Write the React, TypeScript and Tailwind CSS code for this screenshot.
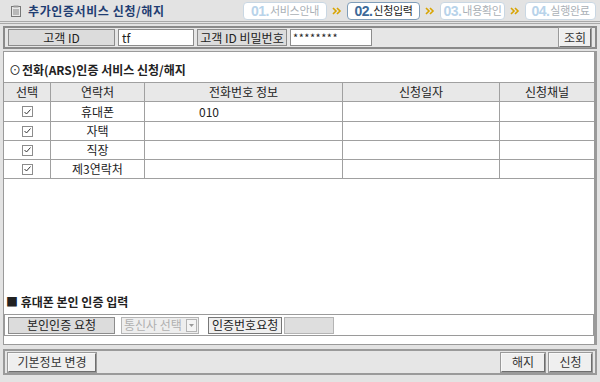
import { ReactNode } from "react"

const font = { fontFamily: '"Noto Sans CJK KR", "Noto Sans", sans-serif' }

function Step({ no, label, w, active }: { no: string; label: string; w: string; active?: boolean }) {
    return (
        <div
            className={
                w +
                " h-[18px] flex items-center justify-center rounded-[4px] bg-white border " +
                (active ? "border-[#7f9db9] text-[#222]" : "border-[#c9d7e3] text-[#aab0b6]")
            }
        >
            <span
                className={
                    "text-[14px] font-bold leading-none tracking-[-0.5px] " +
                    (active ? "text-[#3d6a99]" : "text-[#b8d3ea]")
                }
                style={{ fontFamily: '"Liberation Sans", sans-serif' }}
            >
                {no}.
            </span>
            <span className="ml-[1px] text-[11px] leading-none tracking-[-0.3px]">{label}</span>
        </div>
    )
}

function Chevron() {
    return (
        <svg width="10" height="8" viewBox="0 0 10 8" className="mx-[5px]">
            <path d="M1 1 L4 4 L1 7" stroke="#d9a400" strokeWidth="1.6" fill="none" />
            <path d="M5 1 L8 4 L5 7" stroke="#d9a400" strokeWidth="1.6" fill="none" />
        </svg>
    )
}

function Label({ children, w }: { children: ReactNode; w: string }) {
    return (
        <div
            className={
                w +
                " h-[17px] flex items-center justify-center bg-[#dcdcdc] border border-[#8c8c8c] text-[12px] text-[#222]"
            }
        >
            {children}
        </div>
    )
}

function Btn({ children, w }: { children: ReactNode; w: string }) {
    return (
        <div
            className={
                w +
                " h-[19px] flex items-center justify-center bg-[#efefef] border border-t-[#f8f8f8] border-l-[#f8f8f8] border-r-[#6e6e6e] border-b-[#6e6e6e] outline outline-1 outline-[#9a9a9a] text-[12px] text-[#333]"
            }
        >
            {children}
        </div>
    )
}

function Check() {
    return (
        <div className="w-[11px] h-[11px] border border-[#8c8c8c] bg-white flex items-center justify-center">
            <svg width="7" height="6" viewBox="0 0 7 6">
                <path d="M0.5 3 L2.5 5 L6.5 0.5" stroke="#333" strokeWidth="1" fill="none" />
            </svg>
        </div>
    )
}

const rows = [
    { name: "휴대폰", phone: "010" },
    { name: "자택", phone: "" },
    { name: "직장", phone: "" },
    { name: "제3연락처", phone: "" },
]

const cols = "grid grid-cols-[46px_94px_198px_157px_1fr]"

export default function App() {
    return (
        <div className="w-[600px] h-[382px] bg-[#e3e3e3] flex flex-col text-[#222]" style={font}>
            <div className="h-[24px] flex items-center border-b-[3px] border-double border-[#a8a8a8]">
                <svg width="10" height="12" viewBox="0 0 10 12" className="ml-[11px] mr-[7px]">
                    <rect x="0.5" y="1.5" width="9" height="10" fill="#e8e8e8" stroke="#777" />
                    <rect x="2.5" y="0.5" width="5" height="2" fill="#999" />
                    <path d="M2 5 H8 M2 7 H8 M2 9 H8" stroke="#888" strokeWidth="1" />
                </svg>
                <span className="text-[12px] font-bold text-[#1f3d72] tracking-[0.6px]">추가인증서비스 신청/해지</span>
                <div className="ml-auto mr-[4px] flex items-center">
                    <Step no="01" label="서비스안내" w="w-[84px]" />
                    <Chevron />
                    <Step no="02" label="신청입력" w="w-[73px]" active />
                    <Chevron />
                    <Step no="03" label="내용확인" w="w-[65px]" />
                    <Chevron />
                    <Step no="04" label="실행완료" w="w-[71px]" />
                </div>
            </div>

            <div className="mx-[3px] mt-[2px] h-[23px] border-2 border-[#8a8a8a] bg-[#e6e6e6] flex items-center pl-[3px] pr-[4px] gap-[3px]">
                <Label w="w-[107px]">고객 ID</Label>
                <div className="w-[76px] h-[17px] bg-white border border-[#8c8c8c] text-[12px] leading-[15px] px-[3px]">tf</div>
                <Label w="w-[90px]">고객 ID 비밀번호</Label>
                <div className="w-[82px] h-[17px] bg-white border border-[#8c8c8c] text-[11px] leading-[15px] px-[2px] tracking-[0.5px]">********</div>
                <div className="ml-auto">
                    <Btn w="w-[32px]">조회</Btn>
                </div>
            </div>

            <div className="mx-[3px] mt-[2px] flex-1 bg-white border border-[#9a9a9a] border-r-[3px] flex flex-col">
                <div className="h-[30px] flex items-end pb-[3px] pl-[5px] text-[12px] font-bold">
                    <span className="font-normal mr-[1px]">⊙</span>전화(ARS)인증 서비스 신청/해지
                </div>
                <div className="border-y border-[#a0a0a0] text-[12px]">
                    <div className={cols + " h-[19px] bg-[#e8e8e8] border-b border-[#a0a0a0]"}>
                        {["선택", "연락처", "전화번호 정보", "신청일자", "신청채널"].map((h, i) => (
                            <div key={h} className={"flex items-center justify-center " + (i > 0 ? "border-l border-[#a0a0a0]" : "")}>
                                {h}
                            </div>
                        ))}
                    </div>
                    {rows.map((r, i) => (
                        <div key={r.name} className={cols + " h-[19px] " + (i > 0 ? "border-t border-[#a0a0a0]" : "")}>
                            <div className="flex items-center justify-center">
                                <Check />
                            </div>
                            <div className="flex items-center justify-center border-l border-[#a0a0a0]">{r.name}</div>
                            <div className="flex items-center pl-[54px] border-l border-[#a0a0a0]">{r.phone}</div>
                            <div className="border-l border-[#a0a0a0]" />
                            <div className="border-l border-[#a0a0a0]" />
                        </div>
                    ))}
                </div>
                <div className="flex-1" />
                <div className="pl-[2px] text-[12px] font-bold leading-none pb-[6px]">■ 휴대폰 본인 인증 입력</div>
                <div className="h-[22px] border border-[#9a9a9a] flex items-center pl-[3px] gap-[6px] mb-[8px]">
                    <Label w="w-[107px]">본인인증 요청</Label>
                    <div className="w-[78px] h-[17px] border border-[#b4b4b4] bg-[#eeeeee] flex items-center text-[12px] text-[#b0b0b0] pl-[2px]">
                        통신사 선택
                        <div className="ml-auto mr-[1px] w-[11px] h-[13px] border border-[#b4b4b4] bg-[#f4f4f4] flex items-center justify-center">
                            <svg width="5" height="3" viewBox="0 0 5 3">
                                <path d="M0 0 H5 L2.5 3 Z" fill="#9a9a9a" />
                            </svg>
                        </div>
                    </div>
                    <div className="flex items-center gap-[2px] ml-[3px]">
                        <div className="h-[17px] px-[3px] border border-[#777] bg-[#efefef] flex items-center text-[12px]">인증번호요청</div>
                        <div className="w-[50px] h-[17px] border border-[#b4b4b4] bg-[#dedede]" />
                    </div>
                </div>
            </div>

            <div className="mx-[3px] mt-[4px] mb-[7px] h-[26px] border-2 border-[#9a9a9a] bg-[#e6e6e6] flex items-center px-[3px]">
                <Btn w="w-[88px]">기본정보 변경</Btn>
                <div className="ml-auto flex gap-[4px]">
                    <Btn w="w-[44px]">해지</Btn>
                    <Btn w="w-[43px]">신청</Btn>
                </div>
            </div>
        </div>
    )
}
